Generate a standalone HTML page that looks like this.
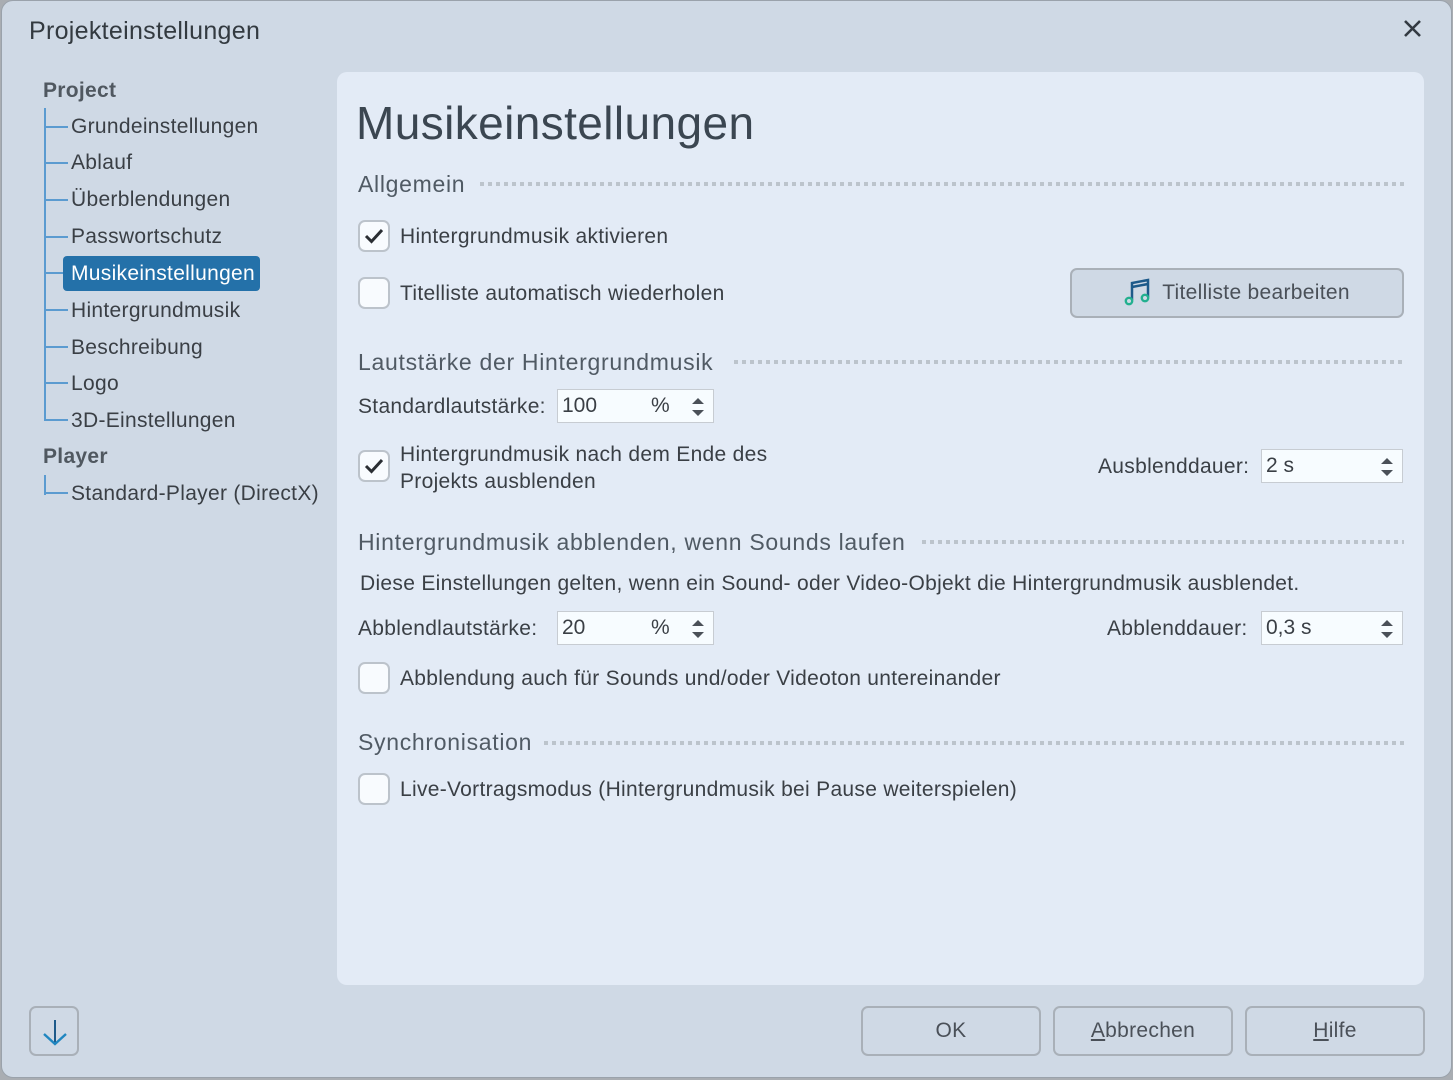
<!DOCTYPE html>
<html><head><meta charset="utf-8"><style>
*{margin:0;padding:0;box-sizing:border-box}
body{width:1453px;height:1080px;background:#a9adb2;font-family:"Liberation Sans",sans-serif;color:#3a3f45;overflow:hidden;position:relative}
.win{position:absolute;left:1px;top:0;width:1451px;height:1078px;background:#cfd9e5;border:1px solid #9aa2ab;border-radius:12px}
.a{position:absolute;white-space:nowrap;line-height:24px;font-size:21px;letter-spacing:0.3px}
.panel{position:absolute;left:337px;top:72px;width:1087px;height:913px;background:#e3ebf6;border-radius:10px}
.tv{position:absolute;left:44px;width:2px;background:#5b9bd0}
.th{position:absolute;left:44px;width:24px;height:2px;background:#5b9bd0}
.sec{position:absolute;left:358px;font-size:23px;letter-spacing:0.7px;color:#505a64;line-height:26px;white-space:nowrap}
.dots{position:absolute;height:4px;background-image:linear-gradient(90deg,#bcc4cc 4px,transparent 4px);background-size:8px 4px}
.cb{position:absolute;left:358px;width:32px;height:32px;border:2px solid #bcc3cb;border-radius:7px;background:#f8fbfe}
.cb svg{position:absolute;left:4px;top:5px}
.inp{position:absolute;height:34px;background:#f7fcff;border:1px solid #c7ccd2}
.inp span{position:absolute;left:4px;top:4px;font-size:21px;line-height:24px;color:#3a3f45}
.spin{position:absolute;right:8px;top:6px}
.btn{position:absolute;border:2px solid #a9b0b8;border-radius:7px;background:#cfd9e5;font-size:21px;letter-spacing:0.3px;color:#4a5058;text-align:center;line-height:45px}
</style></head><body>
<div class="win"></div>
<div class="a" style="left:29px;top:17px;font-size:25px;line-height:28px;color:#333a40">Projekteinstellungen</div>
<svg class="a" style="left:1403px;top:19px" width="19" height="19"><path d="M2 2L17 17M17 2L2 17" stroke="#333a42" stroke-width="2.6"/></svg>

<div class="a" style="left:43px;top:79px;font-weight:bold;font-size:21px;color:#505860">Project</div>
<div class="tv" style="top:108px;height:313px"></div>
<div class="th" style="top:126px"></div><div class="a" style="left:71px;top:115px">Grundeinstellungen</div>
<div class="th" style="top:162px"></div><div class="a" style="left:71px;top:151px">Ablauf</div>
<div class="th" style="top:199px"></div><div class="a" style="left:71px;top:188px">Überblendungen</div>
<div class="th" style="top:236px"></div><div class="a" style="left:71px;top:225px">Passwortschutz</div>
<div class="th" style="top:272px"></div>
<div style="position:absolute;left:63px;top:256px;width:197px;height:35px;background:#2471a9;border-radius:4px"></div>
<div class="a" style="left:71px;top:262px;color:#fff">Musikeinstellungen</div>
<div class="th" style="top:309px"></div><div class="a" style="left:71px;top:299px">Hintergrundmusik</div>
<div class="th" style="top:346px"></div><div class="a" style="left:71px;top:336px">Beschreibung</div>
<div class="th" style="top:382px"></div><div class="a" style="left:71px;top:372px">Logo</div>
<div class="th" style="top:419px"></div><div class="a" style="left:71px;top:409px">3D-Einstellungen</div>
<div class="a" style="left:43px;top:445px;font-weight:bold;font-size:21px;color:#505860">Player</div>
<div class="tv" style="top:475px;height:20px"></div>
<div class="th" style="top:492px"></div><div class="a" style="left:71px;top:482px">Standard-Player (DirectX)</div>

<div class="panel"></div>
<div class="a" style="left:356px;top:97px;font-size:46px;line-height:52px;letter-spacing:0.4px;color:#3b4651">Musikeinstellungen</div>

<div class="sec" style="top:171px">Allgemein</div><div class="dots" style="left:480px;top:182px;width:924px"></div>
<div class="cb" style="top:220px"><svg width="20" height="18"><path d="M2 9L7.5 14.5L18 3" fill="none" stroke="#2a2e33" stroke-width="3"/></svg></div>
<div class="a" style="left:400px;top:225px">Hintergrundmusik aktivieren</div>
<div class="cb" style="top:277px"></div>
<div class="a" style="left:400px;top:282px">Titelliste automatisch wiederholen</div>
<div class="btn" style="left:1070px;top:268px;width:334px;height:50px"><svg style="vertical-align:middle;margin-right:10px;margin-top:-4px" width="28" height="30" viewBox="0 0 28 30"><path d="M8 24V7L24 4V21" fill="none" stroke="#1d5a8a" stroke-width="2.5"/><path d="M8 11L24 8" stroke="#1d5a8a" stroke-width="2.5"/><circle cx="5" cy="25" r="3.2" fill="none" stroke="#23b08f" stroke-width="2.4"/><circle cx="21" cy="22" r="3.2" fill="none" stroke="#23b08f" stroke-width="2.4"/></svg>Titelliste bearbeiten</div>

<div class="sec" style="top:349px">Lautstärke der Hintergrundmusik</div><div class="dots" style="left:734px;top:360px;width:670px"></div>
<div class="a" style="left:358px;top:395px">Standardlautstärke:</div>
<div class="inp" style="left:557px;top:389px;width:157px"><span>100</span><span style="left:93px">%</span><svg class="spin" width="14" height="22"><path d="M1 8L7 2L13 8Z M1 14L7 20L13 14Z" fill="#4a5058"/></svg></div>
<div class="cb" style="top:450px"><svg width="20" height="18"><path d="M2 9L7.5 14.5L18 3" fill="none" stroke="#2a2e33" stroke-width="3"/></svg></div>
<div class="a" style="left:400px;top:443px">Hintergrundmusik nach dem Ende des</div>
<div class="a" style="left:400px;top:470px">Projekts ausblenden</div>
<div class="a" style="left:1098px;top:455px">Ausblenddauer:</div>
<div class="inp" style="left:1261px;top:449px;width:142px"><span>2 s</span><svg class="spin" width="14" height="22"><path d="M1 8L7 2L13 8Z M1 14L7 20L13 14Z" fill="#4a5058"/></svg></div>

<div class="sec" style="top:529px">Hintergrundmusik abblenden, wenn Sounds laufen</div><div class="dots" style="left:922px;top:540px;width:482px"></div>
<div class="a" style="left:360px;top:572px">Diese Einstellungen gelten, wenn ein Sound- oder Video-Objekt die Hintergrundmusik ausblendet.</div>
<div class="a" style="left:358px;top:617px">Abblendlautstärke:</div>
<div class="inp" style="left:557px;top:611px;width:157px"><span>20</span><span style="left:93px">%</span><svg class="spin" width="14" height="22"><path d="M1 8L7 2L13 8Z M1 14L7 20L13 14Z" fill="#4a5058"/></svg></div>
<div class="a" style="left:1107px;top:617px">Abblenddauer:</div>
<div class="inp" style="left:1261px;top:611px;width:142px"><span>0,3 s</span><svg class="spin" width="14" height="22"><path d="M1 8L7 2L13 8Z M1 14L7 20L13 14Z" fill="#4a5058"/></svg></div>
<div class="cb" style="top:662px"></div>
<div class="a" style="left:400px;top:667px">Abblendung auch für Sounds und/oder Videoton untereinander</div>

<div class="sec" style="top:729px">Synchronisation</div><div class="dots" style="left:544px;top:741px;width:860px"></div>
<div class="cb" style="top:773px"></div>
<div class="a" style="left:400px;top:778px">Live-Vortragsmodus (Hintergrundmusik bei Pause weiterspielen)</div>

<div class="btn" style="left:29px;top:1006px;width:50px;height:50px"><svg style="position:absolute;left:11px;top:10px" width="26" height="28"><path d="M13 2V25" stroke="#1d5a8a" stroke-width="2"/><path d="M2 16L13 26L24 16" fill="none" stroke="#1f86c0" stroke-width="2.4"/></svg></div>
<div class="btn" style="left:861px;top:1006px;width:180px;height:50px">OK</div>
<div class="btn" style="left:1053px;top:1006px;width:180px;height:50px"><u>A</u>bbrechen</div>
<div class="btn" style="left:1245px;top:1006px;width:180px;height:50px"><u>H</u>ilfe</div>
</body></html>
